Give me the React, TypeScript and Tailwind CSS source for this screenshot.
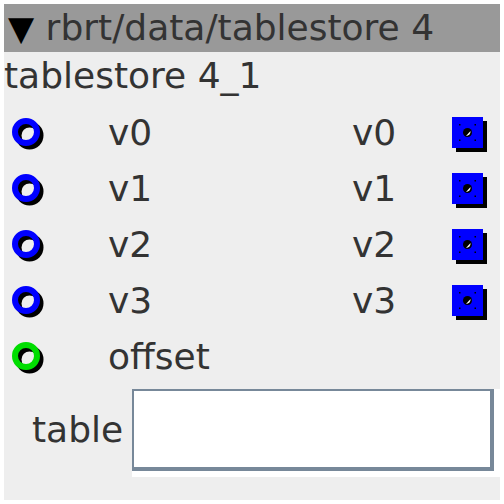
const ports = [
  { name: "v0", out: "v0" },
  { name: "v1", out: "v1" },
  { name: "v2", out: "v2" },
  { name: "v3", out: "v3" },
];

function Ring({ color }: { color: string }) {
  return (
    <svg width="34" height="34" viewBox="0 0 34 34">
      <circle cx="17.5" cy="17.5" r="11" fill="none" stroke="#000" strokeWidth="6" />
      <circle cx="14" cy="14" r="11" fill="none" stroke={color} strokeWidth="6" />
    </svg>
  );
}

function Jack() {
  return (
    <svg width="36" height="36" viewBox="0 0 36 36">
      <rect x="4" y="4" width="31" height="31" fill="#000" />
      <rect x="0" y="0" width="31" height="31" fill="#0000ff" />
      <circle cx="15.5" cy="15.5" r="4.5" fill="#000" />
      <path d="M18.5 14 A4.5 4.5 0 0 1 14 19 Z" fill="#fff" />
      <rect x="7" y="7" width="1.5" height="1.5" fill="#000" />
      <rect x="22.5" y="7" width="1.5" height="1.5" fill="#000" />
      <rect x="7" y="22.5" width="1.5" height="1.5" fill="#000" />
      <rect x="22.5" y="22.5" width="1.5" height="1.5" fill="#000" />
    </svg>
  );
}

export default function App() {
  return (
    <div className="w-[504px] h-[504px] bg-white p-[4px] font-['DejaVu_Sans',sans-serif] text-[#333]">
      <div className="w-[496px] h-[496px] bg-[#eeeeee] flex flex-col">
        <div className="h-[48px] bg-[#999999] flex items-center pl-[4px] text-[36px] leading-none whitespace-nowrap">
          <span className="text-black text-[34px]">▼</span>
          <span>&nbsp;rbrt/data/tablestore 4</span>
        </div>
        <div className="h-[48px] flex items-center text-[36px] leading-none whitespace-nowrap">
          tablestore 4_1
        </div>

        <div className="mt-[5px] flex flex-col">
          {ports.map((p) => (
            <div key={p.name} className="h-[56px] flex items-center">
              <div className="w-[104px] pl-[8px] pt-[4px]">
                <Ring color="#0000ff" />
              </div>
              <div className="w-[244px] text-[36px] leading-none">{p.name}</div>
              <div className="w-[100px] text-[36px] leading-none">{p.out}</div>
              <div className="pt-[3px]">
                <Jack />
              </div>
            </div>
          ))}
          <div className="h-[56px] flex items-center">
            <div className="w-[104px] pl-[8px] pt-[4px]">
              <Ring color="#00dd00" />
            </div>
            <div className="text-[36px] leading-none">offset</div>
          </div>
        </div>

        <div className="mt-[4px] flex items-start">
          <div className="w-[128px] h-[82px] flex items-center pl-[28px] text-[36px] leading-none">table</div>
          <div className="border-b-[6px] border-r-[6px] border-white">
            <div className="w-[362px] h-[82px] bg-white border-t-2 border-l-2 border-b-4 border-r-4 border-[#778899]" />
          </div>
        </div>
      </div>
    </div>
  );
}
